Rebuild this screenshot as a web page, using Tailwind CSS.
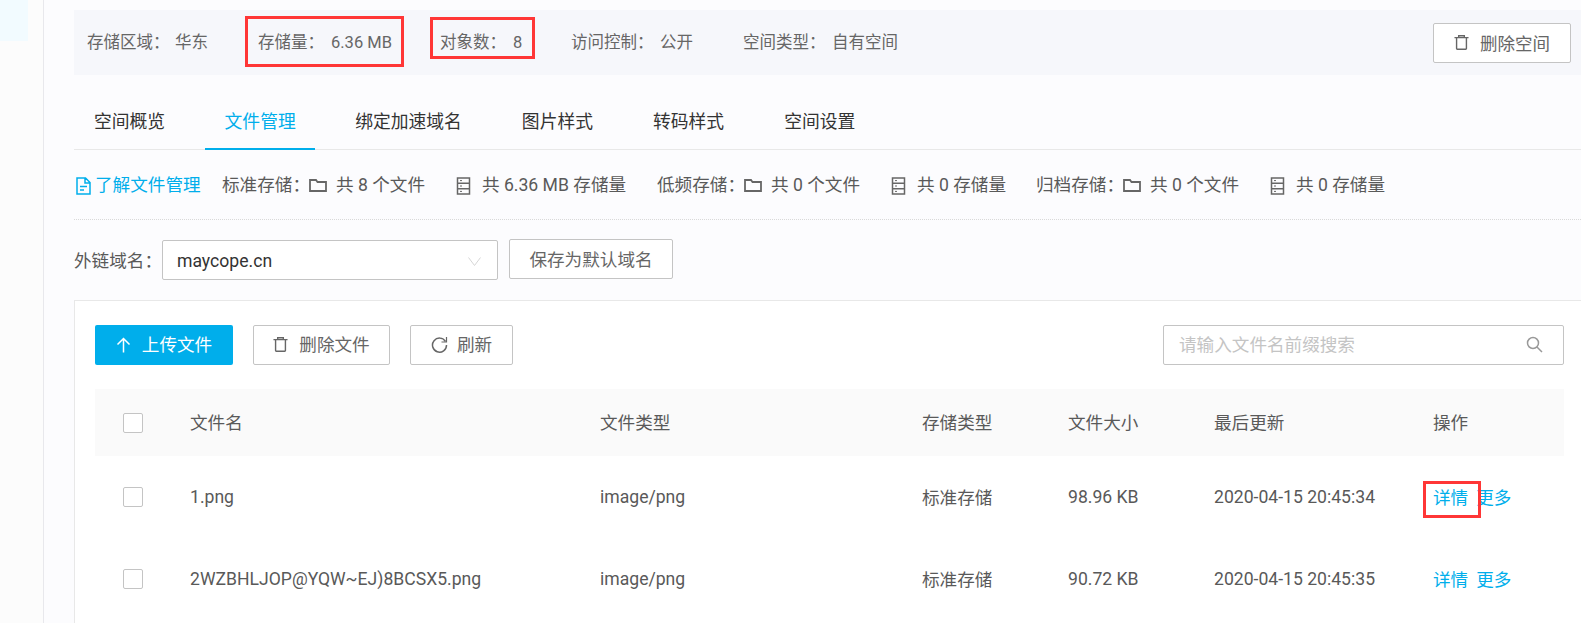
<!DOCTYPE html>
<html lang="zh">
<head>
<meta charset="utf-8">
<script src="https://cdn.jsdelivr.net/npm/@tailwindcss/browser@4"></script>
</head>
<body class="w-[1581px] h-[623px] overflow-hidden bg-[#fcfcfe] font-['Roboto','Noto_Sans_CJK_SC',sans-serif] text-[#595959]">
<svg class="hidden">
<symbol id="trash" viewBox="0 0 16 16"><path d="M.5 2.750h15M5 2.750V.75h6v2M2.750 2.750V14.500c0 .4.300.750.750.750h9c.4 0 .750-.350.750-.750V2.750" fill="none" stroke="currentColor" stroke-width="1.500"/></symbol>
<symbol id="folder" viewBox="0 0 18 13"><path d="M1 1h6l1.500 2H17v9H1z" fill="none" stroke="currentColor" stroke-width="1.800"/></symbol>
<symbol id="server" viewBox="0 0 14 18"><path d="M1 1h12v16H1zM1 6.300h12M1 11.700h12" fill="none" stroke="currentColor" stroke-width="1.500"/><path d="M3.500 3.600h2M3.500 9h2M3.500 14.400h2" stroke="currentColor" stroke-width="1"/></symbol>
</svg>
<div class="flex h-[623px] relative overflow-hidden">
  <aside class="w-[44px] shrink-0 border-r border-[#e8e8ec] bg-[#fcfcfc]">
    <div class="w-[28px] h-[41px] bg-[#f2fbff]"></div>
  </aside>
  <main class="flex-1 min-w-0 pl-[30px] pt-[10px]">
    <!-- space summary -->
    <section class="h-[65px] bg-[#f6f7fb] flex items-center pt-[2px] text-[16.500px] text-[#666] whitespace-nowrap">
      <span class="ml-[13px] w-[88px]">存储区域：</span><span class="w-[83px]">华东</span>
      <span class="w-[73px]">存储量：</span><span class="w-[109px]">6.36 MB</span>
      <span class="w-[73px]">对象数：</span><span class="w-[58px]">8</span>
      <span class="w-[89px]">访问控制：</span><span class="w-[83px]">公开</span>
      <span class="w-[89px]">空间类型：</span><span>自有空间</span>
      <button class="ml-auto -mt-[2px] mr-[10px] w-[138px] h-[40px] bg-white border border-[#c4c4c4] rounded-[2px] flex items-center justify-center gap-[11px] pt-[3px] text-[17.500px] text-[#666]">
        <svg class="w-[15px] h-[15px] -mt-[3px]"><use href="#trash"/></svg>删除空间
      </button>
    </section>
    <!-- tabs -->
    <nav class="h-[66px] mt-[9px] flex items-end border-b border-[#e8e8e8] text-[17.800px] text-[#333] whitespace-nowrap">
      <a class="pl-[20px] pr-[40px] h-[65px] flex items-center pt-[12px]">空间概览</a>
      <a class="w-[110px] h-[66px] -mb-px flex items-center justify-center pt-[13px] text-[#00aeeb] border-b-2 border-[#00aeeb]">文件管理</a>
      <a class="pl-[40px] pr-[30px] h-[65px] flex items-center pt-[12px]">绑定加速域名</a>
      <a class="px-[30px] h-[65px] flex items-center pt-[12px]">图片样式</a>
      <a class="px-[30px] h-[65px] flex items-center pt-[12px]">转码样式</a>
      <a class="px-[30px] h-[65px] flex items-center pt-[12px]">空间设置</a>
    </nav>
    <!-- storage stats -->
    <div class="h-[70px] flex items-center border-b border-dotted border-[#d9d9d9] text-[17.600px] whitespace-nowrap pt-[2px]">
      <svg class="ml-[2px] w-[15px] h-[18px] text-[#00aeeb]" viewBox="0 0 15 18" fill="none" stroke="currentColor" stroke-width="1.500"><path d="M1 1h8.500L14 5.500V17H1zM9 1v5h5M4 9.500h7M4 13h4"/></svg>
      <a class="ml-[4px] w-[127px] text-[#00aeeb]">了解文件管理</a>
      <span class="w-[87px]">标准存储：</span><svg class="w-[18px] h-[13px] mr-[9px] text-[#666]"><use href="#folder"/></svg><span class="w-[120px]">共 8 个文件</span>
      <svg class="w-[15px] h-[18px] mr-[11px] text-[#666]"><use href="#server"/></svg><span class="w-[175px]">共 6.36 MB 存储量</span>
      <span class="w-[87px]">低频存储：</span><svg class="w-[18px] h-[13px] mr-[9px] text-[#666]"><use href="#folder"/></svg><span class="w-[120px]">共 0 个文件</span>
      <svg class="w-[15px] h-[18px] mr-[11px] text-[#666]"><use href="#server"/></svg><span class="w-[119px]">共 0 存储量</span>
      <span class="w-[87px]">归档存储：</span><svg class="w-[18px] h-[13px] mr-[9px] text-[#666]"><use href="#folder"/></svg><span class="w-[120px]">共 0 个文件</span>
      <svg class="w-[15px] h-[18px] mr-[11px] text-[#666]"><use href="#server"/></svg><span>共 0 存储量</span>
    </div>
    <!-- domain -->
    <div class="mt-[20px] h-[40px] flex items-center text-[17.600px] whitespace-nowrap">
      <span class="w-[88px] pt-[2px]">外链域名：</span>
      <div class="w-[336px] h-[40px] bg-white border border-[#c4c4c4] rounded-[2px] flex items-center justify-between pl-[14px] pr-[16px] pt-[2px] text-[#333]">
        maycope.cn
        <svg class="w-[13px] h-[9px] text-[#d6d6d6]" viewBox="0 0 13 9" fill="none" stroke="currentColor" stroke-width="1"><path d="M.500.500l6 8 6-8"/></svg>
      </div>
      <button class="ml-[11px] w-[164px] h-[40px] -mt-[2px] pt-[2px] bg-white border border-[#c4c4c4] rounded-[2px] text-[#666]">保存为默认域名</button>
    </div>
    <!-- file card -->
    <section class="mt-[20px] h-[323px] overflow-hidden bg-white border-t border-l border-[#e8e8e8] pt-[23px] pl-[20px] pr-[17px]">
      <div class="flex items-center h-[41px] text-[17.600px] whitespace-nowrap">
        <button class="w-[138px] h-[40px] pt-[2px] bg-[#00aeeb] text-white rounded-[2px] flex items-center justify-center gap-[11px]">
          <svg class="w-[15px] h-[16px] -mt-[2px]" viewBox="0 0 15 16" fill="none" stroke="currentColor" stroke-width="1.500"><path d="M7.500 15.500V1.500M1.500 7.500l6-6 6 6"/></svg>上传文件
        </button>
        <button class="ml-[20px] w-[137px] h-[40px] pt-[2px] bg-white border border-[#c4c4c4] rounded-[2px] flex items-center justify-center gap-[11px] text-[#666]">
          <svg class="w-[15px] h-[15px] -mt-[2px]"><use href="#trash"/></svg>删除文件
        </button>
        <button class="ml-[20px] w-[103px] h-[40px] pt-[2px] bg-white border border-[#c4c4c4] rounded-[2px] flex items-center justify-center gap-[9px] text-[#666]">
          <svg class="w-[17px] h-[17px] -mt-[2px]" viewBox="0 0 17 17" fill="none" stroke="currentColor" stroke-width="1.500"><path d="M14.500 5.500A7 7 0 1 0 15.500 9"/><path d="M15.500 1v5h-5" stroke-width="1.200"/></svg>刷新
        </button>
        <div class="ml-auto w-[401px] h-[40px] pt-[2px] border border-[#c4c4c4] rounded-[2px] flex items-center justify-between pl-[15px] pr-[20px] text-[#c4c4c4]">
          请输入文件名前缀搜索
          <svg class="w-[17px] h-[17px] -mt-[2px] text-[#999]" viewBox="0 0 17 17" fill="none" stroke="currentColor" stroke-width="1.500"><circle cx="7" cy="7" r="5.500"/><path d="M11 11l5 5"/></svg>
        </div>
      </div>
      <div class="mt-[24px] h-[67px] bg-[#fafafa] grid grid-cols-[95px_410px_322px_146px_146px_219px_1fr] items-center text-[17.600px]">
        <span class="ml-[28px] w-[20px] h-[20px] bg-white border border-[#c4c4c4] rounded-[2px]"></span>
        <span class="pt-[2px]">文件名</span><span class="pt-[2px]">文件类型</span><span class="pt-[2px]">存储类型</span><span class="pt-[2px]">文件大小</span><span class="pt-[2px]">最后更新</span><span class="pt-[2px]">操作</span>
      </div>
      <div class="h-[82px] grid grid-cols-[95px_410px_322px_146px_146px_219px_1fr] items-center text-[17.600px]">
        <span class="ml-[28px] w-[20px] h-[20px] bg-white border border-[#c4c4c4] rounded-[2px]"></span>
        <span>1.png</span><span>image/png</span><span class="pt-[2px]">标准存储</span><span>98.96 KB</span><span>2020-04-15 20:45:34</span>
        <span class="pt-[2px] flex gap-[8px] text-[#00aeeb] whitespace-nowrap"><a>详情</a><a>更多</a></span>
      </div>
      <div class="h-[82px] grid grid-cols-[95px_410px_322px_146px_146px_219px_1fr] items-center text-[17.600px]">
        <span class="ml-[28px] w-[20px] h-[20px] bg-white border border-[#c4c4c4] rounded-[2px]"></span>
        <span>2WZBHLJOP@YQW~EJ)8BCSX5.png</span><span>image/png</span><span class="pt-[2px]">标准存储</span><span>90.72 KB</span><span>2020-04-15 20:45:35</span>
        <span class="pt-[2px] flex gap-[8px] text-[#00aeeb] whitespace-nowrap"><a>详情</a><a>更多</a></span>
      </div>
    </section>
  </main>
  <!-- red annotation boxes -->
  <div class="absolute left-[245px] top-[16px] w-[159px] h-[51px] border-[3px] border-[#ff3636]"></div>
  <div class="absolute left-[430px] top-[17px] w-[105px] h-[42px] border-[3px] border-[#ff3636]"></div>
  <div class="absolute left-[1423px] top-[481px] w-[58px] h-[37px] border-[3px] border-[#ff3636]"></div>
</div>
</body>
</html>
